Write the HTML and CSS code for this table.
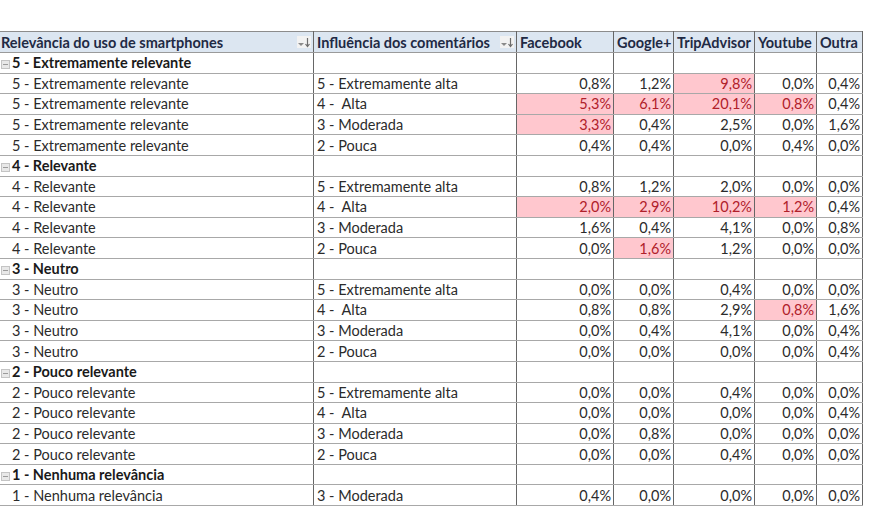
FILE: index.html
```html
<!DOCTYPE html>
<html lang="pt">
<head>
<meta charset="utf-8">
<link rel="stylesheet" href="styles.css">
</head>
<body>
<table class="pivot">
  <colgroup>
    <col class="c1"><col class="c2"><col class="c3"><col class="c4"><col class="c5"><col class="c6"><col class="c7">
  </colgroup>
  <thead>
    <tr class="hdr">
      <th class="lbl"><span class="htext">Relevância do uso de smartphones</span><svg class="sort" viewBox="0 0 14 12" width="14" height="12"><path d="M1 7 L4 10 L7 7 Z" fill="#8a8a8a"/><path d="M10.5 2 V10 M8.5 8 L10.5 10.5 L12.5 8" stroke="#6d6d6d" stroke-width="1.2" fill="none"/></svg></th>
      <th class="lbl"><span class="htext">Influência dos comentários</span><svg class="sort" viewBox="0 0 14 12" width="14" height="12"><path d="M1 7 L4 10 L7 7 Z" fill="#8a8a8a"/><path d="M10.5 2 V10 M8.5 8 L10.5 10.5 L12.5 8" stroke="#6d6d6d" stroke-width="1.2" fill="none"/></svg></th>
      <th>Facebook</th><th>Google+</th><th>TripAdvisor</th><th>Youtube</th><th>Outra</th>
    </tr>
  </thead>
  <tbody>
    <tr class="grp"><td><span class="mbox"></span>5 - Extremamente relevante</td><td></td><td></td><td></td><td></td><td></td><td></td></tr>
    <tr><td class="sub">5 - Extremamente relevante</td><td>5 - Extremamente alta</td><td class="n">0,8%</td><td class="n">1,2%</td><td class="n hi">9,8%</td><td class="n">0,0%</td><td class="n">0,4%</td></tr>
    <tr><td class="sub">5 - Extremamente relevante</td><td>4 -&nbsp; Alta</td><td class="n hi">5,3%</td><td class="n hi">6,1%</td><td class="n hi">20,1%</td><td class="n hi">0,8%</td><td class="n">0,4%</td></tr>
    <tr><td class="sub">5 - Extremamente relevante</td><td>3 - Moderada</td><td class="n hi">3,3%</td><td class="n">0,4%</td><td class="n">2,5%</td><td class="n">0,0%</td><td class="n">1,6%</td></tr>
    <tr><td class="sub">5 - Extremamente relevante</td><td>2 - Pouca</td><td class="n">0,4%</td><td class="n">0,4%</td><td class="n">0,0%</td><td class="n">0,4%</td><td class="n">0,0%</td></tr>
    <tr class="grp"><td><span class="mbox"></span>4 - Relevante</td><td></td><td></td><td></td><td></td><td></td><td></td></tr>
    <tr><td class="sub">4 - Relevante</td><td>5 - Extremamente alta</td><td class="n">0,8%</td><td class="n">1,2%</td><td class="n">2,0%</td><td class="n">0,0%</td><td class="n">0,0%</td></tr>
    <tr><td class="sub">4 - Relevante</td><td>4 -&nbsp; Alta</td><td class="n hi">2,0%</td><td class="n hi">2,9%</td><td class="n hi">10,2%</td><td class="n hi">1,2%</td><td class="n">0,4%</td></tr>
    <tr><td class="sub">4 - Relevante</td><td>3 - Moderada</td><td class="n">1,6%</td><td class="n">0,4%</td><td class="n">4,1%</td><td class="n">0,0%</td><td class="n">0,8%</td></tr>
    <tr><td class="sub">4 - Relevante</td><td>2 - Pouca</td><td class="n">0,0%</td><td class="n hi">1,6%</td><td class="n">1,2%</td><td class="n">0,0%</td><td class="n">0,0%</td></tr>
    <tr class="grp"><td><span class="mbox"></span>3 - Neutro</td><td></td><td></td><td></td><td></td><td></td><td></td></tr>
    <tr><td class="sub">3 - Neutro</td><td>5 - Extremamente alta</td><td class="n">0,0%</td><td class="n">0,0%</td><td class="n">0,4%</td><td class="n">0,0%</td><td class="n">0,0%</td></tr>
    <tr><td class="sub">3 - Neutro</td><td>4 -&nbsp; Alta</td><td class="n">0,8%</td><td class="n">0,8%</td><td class="n">2,9%</td><td class="n hi">0,8%</td><td class="n">1,6%</td></tr>
    <tr><td class="sub">3 - Neutro</td><td>3 - Moderada</td><td class="n">0,0%</td><td class="n">0,4%</td><td class="n">4,1%</td><td class="n">0,0%</td><td class="n">0,4%</td></tr>
    <tr><td class="sub">3 - Neutro</td><td>2 - Pouca</td><td class="n">0,0%</td><td class="n">0,0%</td><td class="n">0,0%</td><td class="n">0,0%</td><td class="n">0,4%</td></tr>
    <tr class="grp"><td><span class="mbox"></span>2 - Pouco relevante</td><td></td><td></td><td></td><td></td><td></td><td></td></tr>
    <tr><td class="sub">2 - Pouco relevante</td><td>5 - Extremamente alta</td><td class="n">0,0%</td><td class="n">0,0%</td><td class="n">0,4%</td><td class="n">0,0%</td><td class="n">0,0%</td></tr>
    <tr><td class="sub">2 - Pouco relevante</td><td>4 -&nbsp; Alta</td><td class="n">0,0%</td><td class="n">0,0%</td><td class="n">0,0%</td><td class="n">0,0%</td><td class="n">0,4%</td></tr>
    <tr><td class="sub">2 - Pouco relevante</td><td>3 - Moderada</td><td class="n">0,0%</td><td class="n">0,8%</td><td class="n">0,0%</td><td class="n">0,0%</td><td class="n">0,0%</td></tr>
    <tr><td class="sub">2 - Pouco relevante</td><td>2 - Pouca</td><td class="n">0,0%</td><td class="n">0,0%</td><td class="n">0,4%</td><td class="n">0,0%</td><td class="n">0,0%</td></tr>
    <tr class="grp"><td><span class="mbox"></span>1 - Nenhuma relevância</td><td></td><td></td><td></td><td></td><td></td><td></td></tr>
    <tr><td class="sub">1 - Nenhuma relevância</td><td>3 - Moderada</td><td class="n">0,4%</td><td class="n">0,0%</td><td class="n">0,0%</td><td class="n">0,0%</td><td class="n">0,0%</td></tr>
  </tbody>
</table>
</body>
</html>
```

FILE: styles.css
```css
html, body {
  margin: 0;
  padding: 0;
  background: #ffffff;
}
body {
  padding-top: 31px;
  font-family: Lato, "Open Sans", sans-serif;
  font-size: 14.5px;
  color: #2b2b2b;
}
.pivot {
  border-collapse: collapse;
  table-layout: fixed;
  width: 863px;
  margin-left: -1px;
}
.c1 { width: 314px; }
.c2 { width: 203px; }
.c3 { width: 97px; }
.c4 { width: 60px; }
.c5 { width: 81px; }
.c6 { width: 62px; }
.c7 { width: 46px; }

.pivot th, .pivot td {
  height: 20px;
  padding: 0 3px;
  border-top: 1px solid #a8a8a8;
  border-bottom: 1px solid #a8a8a8;
  border-left: 1px solid #666666;
  border-right: 1px solid #666666;
  white-space: nowrap;
  overflow: hidden;
  line-height: 19px;
  box-sizing: border-box;
}
.pivot tbody tr { height: 20.6px; }
.hdr th {
  background: #dce6f1;
  color: #1f2a44;
  font-weight: 700;
  text-align: left;
  border-top: 1px solid #8c8c8c;
  border-bottom: 1px solid #9a9a9a;
  height: 21px;
}
.hdr th.lbl {
  position: relative;
}
.hdr th.lbl .htext {
  display: inline-block;
}
.hdr th:first-child { padding-left: 1px; }
.sort {
  position: absolute;
  right: 2px;
  top: 4px;
  background: #f2f2f2;
}
.grp td {
  font-weight: 700;
  color: #1a1a1a;
}
.grp td:first-child {
  padding-left: 1px;
}
.mbox {
  display: inline-block;
  width: 9px;
  height: 9px;
  border: 1px solid #c4c4c4;
  background: #e8e8e8;
  vertical-align: -1px;
  margin-right: 2px;
  position: relative;
  box-sizing: border-box;
}
.mbox::after {
  content: "";
  position: absolute;
  left: 1px;
  right: 1px;
  top: 3px;
  height: 1px;
  background: #9a9a9a;
}
td.sub {
  padding-left: 12px;
}
td.n {
  text-align: right;
  padding-right: 2px;
}
td.hi {
  background: #ffc7ce;
  color: #b0202a;
}
```
